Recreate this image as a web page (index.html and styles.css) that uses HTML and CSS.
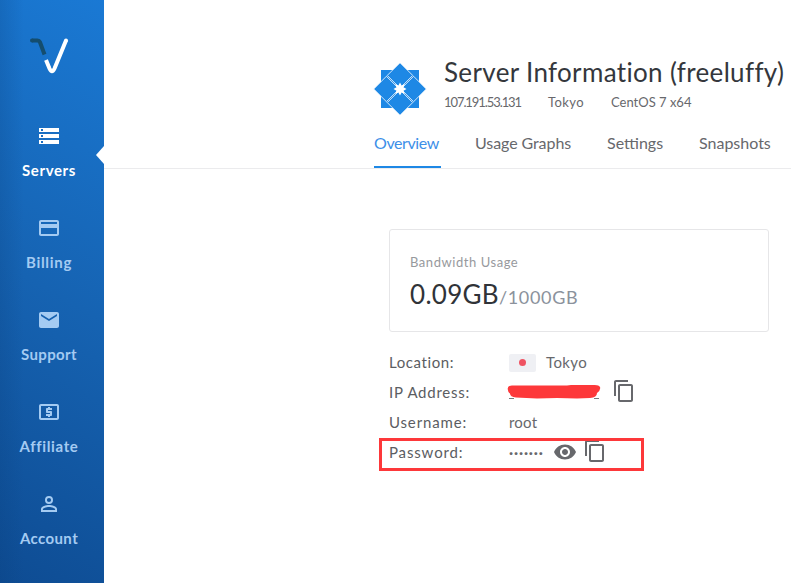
FILE: index.html
```
<!DOCTYPE html>
<html lang="en">
<head>
<meta charset="utf-8">
<title>Server Information</title>
<link rel="stylesheet" href="styles.css">
</head>
<body>
<svg class="defs" aria-hidden="true">
  <symbol id="copy" viewBox="0 0 24 24"><path d="M16 1H4C2.900 1 2 1.900 2 3v14h2V3h12V1zm3 4H8C6.900 5 6 5.900 6 7v14c0 1.100.9 2 2 2h11c1.100 0 2-.9 2-2V7c0-1.100-.9-2-2-2zm0 16H8V7h11v14z"/></symbol>
</svg>
<div class="app">
  <aside class="sidebar">
    <svg class="logo" width="40" height="40" viewBox="0 0 40 40" stroke-width="4" stroke-linejoin="round">
      <g class="logo-dark"><path d="M3 4.500H8.500Q10.200 4.500 11 6.200L15.500 18.500"/><path d="M3 4.500h.01" stroke-linecap="round"/></g>
      <g class="logo-light"><path d="M17 24L20.500 32.500Q23 38 25.500 32.500L37 4.500"/><path d="M37 4.500h.01" stroke-linecap="round"/></g>
    </svg>
    <nav class="menu">
      <a class="item active">
        <svg viewBox="0 0 24 24"><path d="M2 20h20v-4H2v4zm2-3h2v2H4v-2zM2 4v4h20V4H2zm4 3H4V5h2v2zm-4 7h20v-4H2v4zm2-3h2v2H4v-2z"/></svg>
        <span class="servers">Servers</span>
      </a>
      <a class="item">
        <svg viewBox="0 0 24 24"><path d="M20 4H4c-1.110 0-1.990.89-1.990 2L2 18c0 1.110.89 2 2 2h16c1.110 0 2-.89 2-2V6c0-1.110-.89-2-2-2zm0 14H4v-6h16v6zm0-10H4V6h16v2z"/></svg>
        <span class="billing">Billing</span>
      </a>
      <a class="item">
        <svg viewBox="0 0 24 24"><path d="M20 4H4c-1.100 0-1.990.9-1.990 2L2 18c0 1.100.9 2 2 2h16c1.100 0 2-.9 2-2V6c0-1.100-.9-2-2-2zm0 4l-8 5-8-5V6l8 5 8-5v2z"/></svg>
        <span class="support">Support</span>
      </a>
      <a class="item">
        <svg viewBox="0 0 24 24"><path d="M11 17h2v-1h1c.55 0 1-.45 1-1v-3c0-.55-.45-1-1-1h-3v-1h4V8h-2V7h-2v1h-1c-.55 0-1 .45-1 1v3c0 .55.450 1 1 1h3v1H9v2h2v1zm9-13H4c-1.110 0-1.990.89-1.990 2L2 18c0 1.110.89 2 2 2h16c1.110 0 2-.89 2-2V6c0-1.110-.89-2-2-2zm0 14H4V6h16v12z"/></svg>
        <span class="affiliate">Affiliate</span>
      </a>
      <a class="item">
        <svg viewBox="0 0 24 24"><path d="M12 5.900a2.100 2.100 0 1 1 0 4.200 2.100 2.100 0 0 1 0-4.200m0 9c2.970 0 6.100 1.460 6.100 2.100v1.100H5.900V17c0-.64 3.130-2.100 6.100-2.100M12 4a4 4 0 1 0 0 8 4 4 0 0 0 0-8zm0 9c-2.670 0-8 1.340-8 4v3h16v-3c0-2.660-5.330-4-8-4z"/></svg>
        <span class="account">Account</span>
      </a>
    </nav>
    <i class="pointer"></i>
  </aside>
  <main class="main">
    <header class="header">
      <div class="heading">
        <svg class="os" width="52" height="52" viewBox="0 0 52 52">
          <path class="os-fill" d="M7 7h38v38H7z"/>
          <path class="os-petals" d="M26-.3L38.700 12.400 26 25.100 13.300 12.400zM52.300 26L39.600 38.700 26.900 26l12.700-12.700zM26 52.300L13.300 39.600 26 26.900l12.700 12.700zM-.3 26L12.400 13.300 25.100 26 12.400 38.700z"/>
          <path class="os-star" d="M26 19.500l1.600 3 3.200-1.400-1.300 3.100 3 1.800-3 1.800 1.300 3.100-3.200-1.400-1.600 3-1.600-3-3.200 1.400 1.300-3.100-3-1.800 3-1.800-1.300-3.100 3.200 1.400z"/>
        </svg>
        <div>
          <h1>Server Information (freeluffy)</h1>
          <div class="meta"><span class="address">107.191.53.131</span><span class="city">Tokyo</span><span>CentOS 7 x64</span></div>
        </div>
      </div>
      <nav class="tabs">
        <a class="tab current">Overview</a><a class="tab graphs">Usage Graphs</a><a class="tab settings">Settings</a><a class="tab">Snapshots</a>
      </nav>
    </header>
    <section class="content">
      <div class="card">
        <div class="caption">Bandwidth Usage</div>
        <div class="usage"><span class="used">0.09GB</span><span class="quota">/1000GB</span></div>
      </div>
      <dl class="details">
        <div class="row"><dt class="t-location">Location:</dt><dd><i class="flag"></i><span class="place">Tokyo</span></dd></div>
        <div class="row"><dt class="t-ip">IP Address:</dt><dd>
          <svg class="redaction" width="94" height="18" viewBox="0 0 94 18"><path class="trace" d="M2 14.500h5M87 14.500h5"/><path class="ink" d="M6 1.500Q0 1 .8 5.500 1 8.500 3 9.500 3 13 9 13.500L30 14.500 50 14 70 14.500 83 14Q90 13.500 90 9 94 6 93 3 92 .8 87 1L64 1 60 1.500 18 1.500z"/></svg>
          <svg class="copy"><use href="#copy"/></svg></dd></div>
        <div class="row"><dt class="t-user">Username:</dt><dd class="user">root</dd></div>
        <div class="row"><dt class="t-pass">Password:</dt><dd><span class="dots">·······</span><svg class="eye" viewBox="0 0 24 24"><path d="M12 4.500C7 4.500 2.730 7.610 1 12c1.730 4.390 6 7.500 11 7.500s9.270-3.110 11-7.500c-1.730-4.390-6-7.500-11-7.500zM12 17c-2.760 0-5-2.240-5-5s2.240-5 5-5 5 2.240 5 5-2.240 5-5 5zm0-8c-1.660 0-3 1.340-3 3s1.340 3 3 3 3-1.340 3-3-1.340-3-3-3z"/></svg><svg class="copy"><use href="#copy"/></svg><i class="marker"></i></dd></div>
      </dl>
    </section>
  </main>
</div>
</body>
</html>
```
FILE: styles.css
```
* { box-sizing: border-box; }
body { margin: 0; background: #fff; color: #67686c; font: 400 15px/20px Lato, "Open Sans", sans-serif; overflow: hidden; }
svg { display: block; flex: none; fill: currentColor; }
.defs { display: none; }
.app { display: flex; height: 583px; }

.sidebar { position: relative; flex: none; width: 104px; padding-top: 36px; background: linear-gradient(to right, rgba(8, 60, 120, .2), rgba(8, 60, 120, 0) 24px), linear-gradient(30deg, #0e4c93 0%, #1663b2 50%, #1a79d4 100%); }
.logo { margin-left: 29px; fill: none; }
.logo-dark { stroke: #144d6e; }
.logo-light { stroke: #fff; }
.menu { margin-top: 48px; }
.item { display: flex; flex-direction: column; align-items: center; height: 92px; padding-right: 6px; color: #a4cbf2; font-weight: 700; }
.item svg { width: 24px; height: 24px; margin-bottom: 12px; }
.item.active { color: #fff; }
.servers { letter-spacing: .6px; }
.billing { letter-spacing: .7px; }
.support { letter-spacing: .4px; }
.affiliate { letter-spacing: .65px; }
.account { letter-spacing: .4px; }
.pointer { position: absolute; right: 0; top: 146px; border: solid transparent; border-width: 9px 8px 9px 0; border-right-color: #fff; }

.main { flex: 1; min-width: 0; }
.header { height: 169px; padding: 56px 0 0 270px; border-bottom: 1px solid #ebebed; white-space: nowrap; }
.heading { display: flex; gap: 18px; height: 76px; }
.os { margin-top: 7px; overflow: visible; }
.os-fill, .os-petals { fill: #1e88e5; }
.os-petals { stroke: #fff; stroke-width: .8; }
.os-star { fill: #fff; }
h1 { margin: 0; color: #34373c; font-size: 26px; line-height: 32px; font-weight: 400; letter-spacing: .34px; }
.meta { display: flex; margin-top: 4px; font-size: 13px; }
.address { width: 104px; letter-spacing: -1.08px; }
.city { width: 63px; letter-spacing: .4px; }
.tabs { display: flex; gap: 34px; font-size: 16px; }
.tab { height: 36px; border-bottom: 2px solid transparent; line-height: 22px; }
.current { width: 67px; border-color: #1e88e5; color: #3d8fe8; letter-spacing: -.4px; }
.graphs { width: 98px; letter-spacing: -.08px; }
.settings { width: 58px; }

.content { width: 380px; margin: 60px 0 0 285px; }
.card { height: 103px; padding: 22px 20px; border: 1px solid #e6e6e8; border-radius: 3px; }
.caption { color: #97999d; font-size: 13px; letter-spacing: .55px; }
.usage { display: flex; align-items: baseline; margin-top: 6px; line-height: 32px; }
.used { color: #303338; font-size: 26px; letter-spacing: .3px; }
.quota { color: #8b929c; font-size: 18px; letter-spacing: .65px; }
.details { margin: 15px 0 0; }
.row { display: flex; height: 30px; line-height: 30px; }
dt { width: 120px; color: #5b5d62; }
dd { display: flex; align-items: center; position: relative; margin: 0; }
.t-location { letter-spacing: .6px; }
.t-ip { letter-spacing: .75px; }
.t-user, .t-pass { letter-spacing: .85px; }
.user { letter-spacing: .2px; }
.flag { display: flex; align-items: center; justify-content: center; width: 27px; height: 18px; margin: 1px 10px 0 0; border-radius: 2px; background: #eff0f4; }
.flag::before { content: ""; width: 7px; height: 7px; border-radius: 50%; background: #ef5362; }
.place { letter-spacing: .4px; }
.redaction { margin: 1px 11px 0 -2px; }
.ink { fill: #fd383a; }
.trace { stroke: #77797d; }
.copy { width: 24px; height: 24px; margin-bottom: 2px; }
.dots { width: 44px; font-weight: 700; letter-spacing: .85px; }
.eye { width: 24px; height: 24px; margin: 0 6px 1px 0; }
.marker { position: absolute; left: -130px; top: 1px; width: 265px; height: 33px; border: 3px solid #fd383a; }
```
